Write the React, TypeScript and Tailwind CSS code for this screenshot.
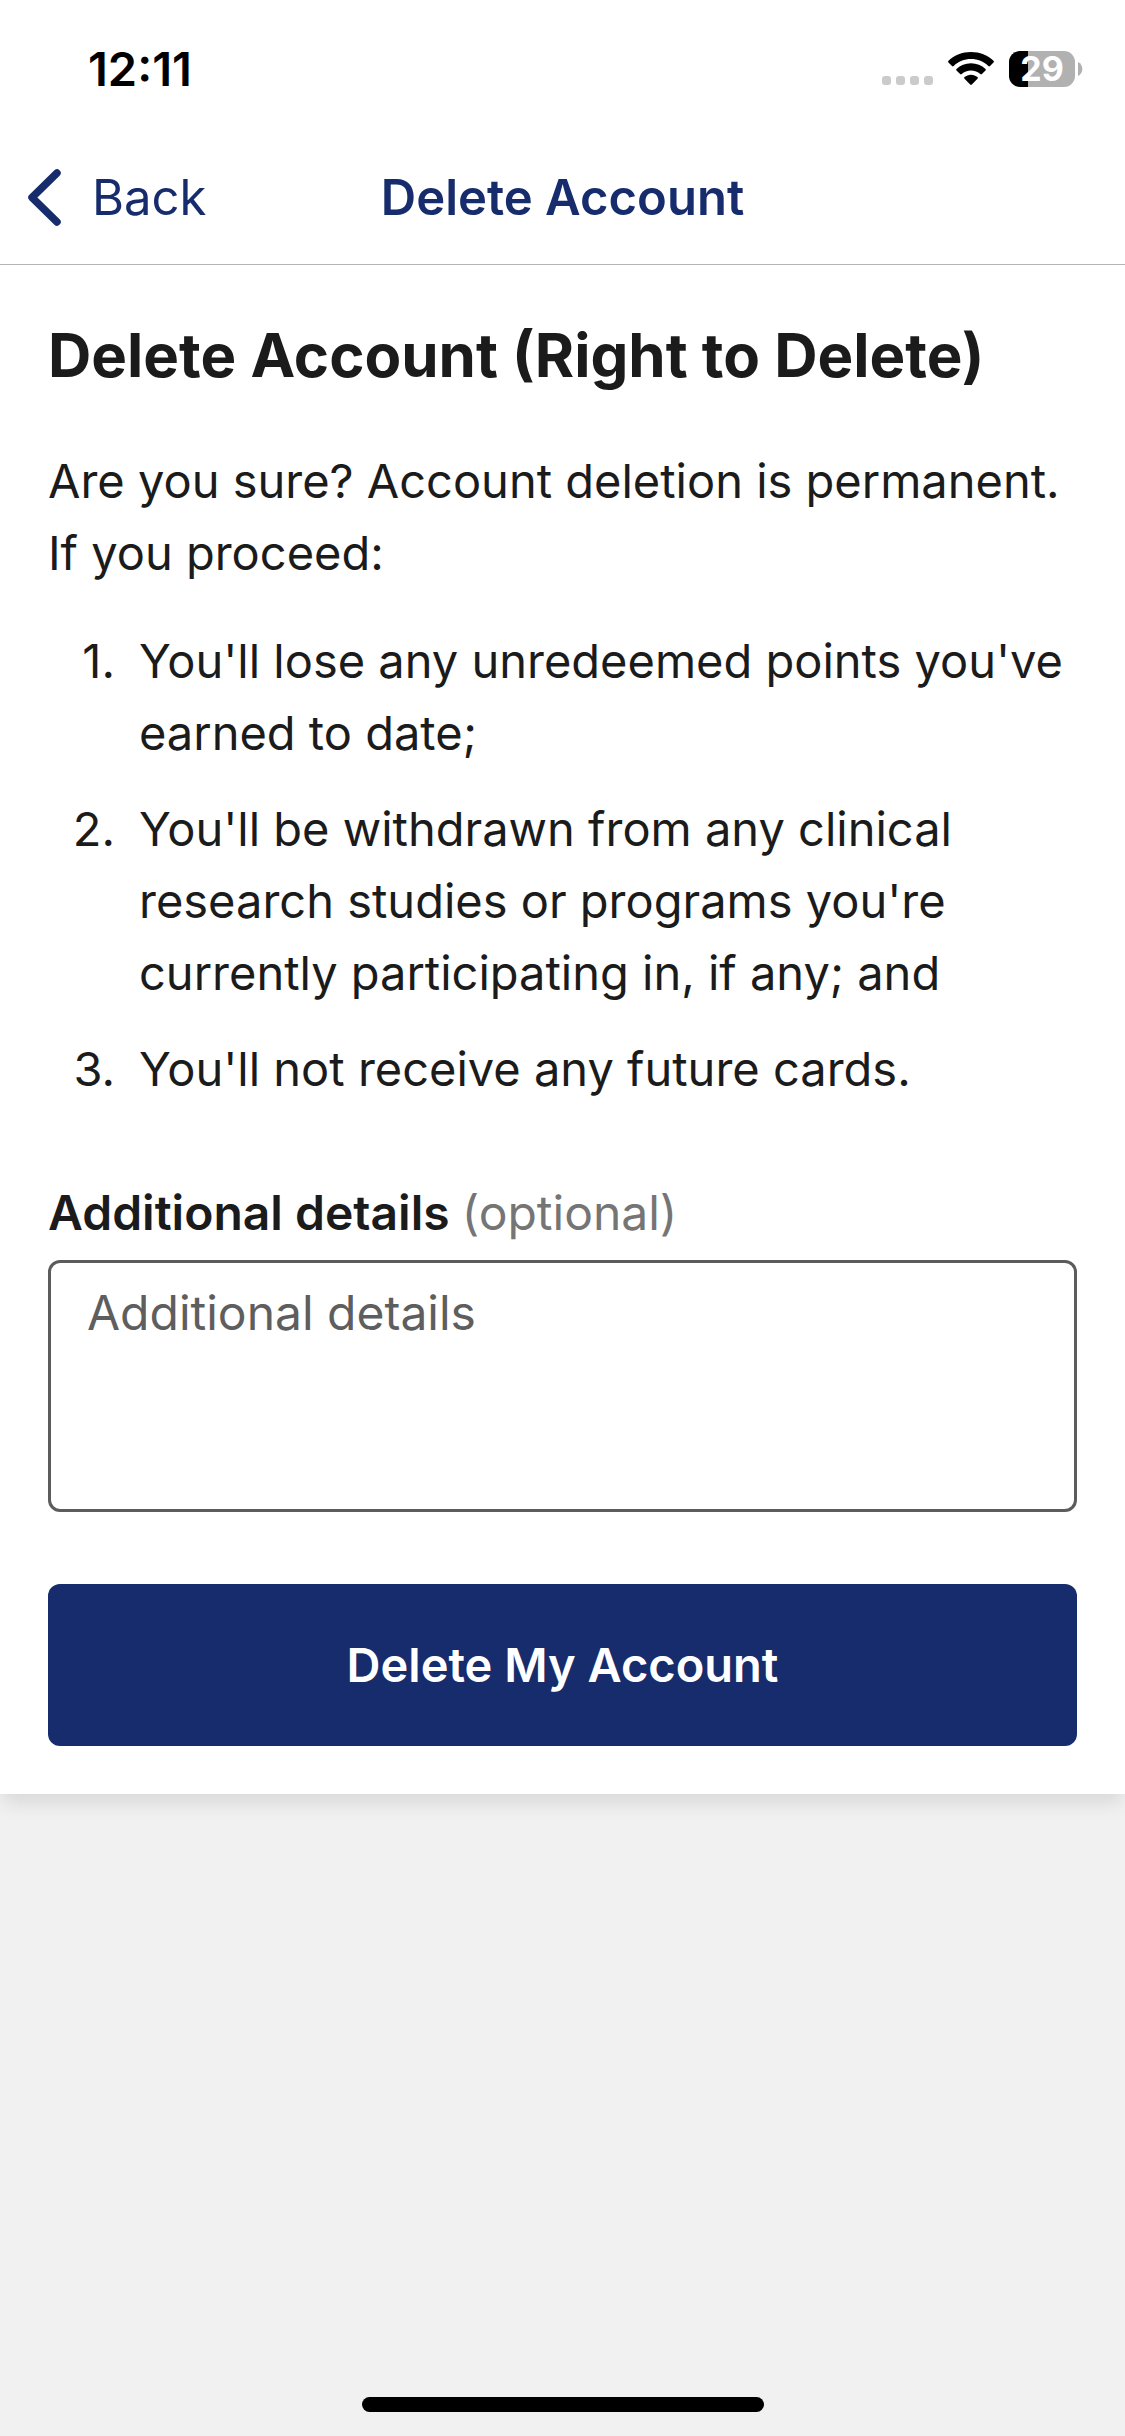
import { useState } from 'react';

const CONSEQUENCES = [
  "You'll lose any unredeemed points you've earned to date;",
  "You'll be withdrawn from any clinical research studies or programs you're currently participating in, if any; and",
  "You'll not receive any future cards.",
];

function StatusBar() {
  return (
    <div className="flex h-[132px] items-center justify-between pl-[88px] pr-[42px] pt-[6px]">
      <span className="text-[47px] leading-[60px] font-semibold text-black">12:11</span>
      <div className="flex items-center gap-[15px]">
        <svg width="114" height="36" viewBox="0 0 114 36" aria-hidden="true">
          <g fill="#cbcbcb">
            <rect x="2" y="25" width="9" height="9" rx="3" />
            <rect x="16" y="25" width="9" height="9" rx="3" />
            <rect x="30" y="25" width="9" height="9" rx="3" />
            <rect x="44" y="25" width="9" height="9" rx="3" />
          </g>
          <g transform="translate(68 1)" fill="#000">
            <path d="M23 0C14.300 0 6.300 3.300 0.500 8.800a1.200 1.200 0 0 0 0 1.700l3.500 3.500a1.200 1.200 0 0 0 1.700 0C10.300 9.700 16.300 7.100 23 7.100s12.700 2.600 17.300 6.900a1.200 1.200 0 0 0 1.700 0l3.500-3.500a1.200 1.200 0 0 0 0-1.700C39.700 3.300 31.700 0 23 0z" />
            <path d="M23 11.300c-5.600 0-10.700 2.100-14.500 5.600a1.200 1.200 0 0 0 0 1.700l3.600 3.500a1.200 1.200 0 0 0 1.600 0c2.500-2.200 5.700-3.600 9.300-3.600s6.800 1.400 9.300 3.600a1.200 1.200 0 0 0 1.600 0l3.600-3.500a1.200 1.200 0 0 0 0-1.700C33.700 13.400 28.600 11.300 23 11.300z" />
            <path d="M23 22.700c-2.500 0-4.800 0.900-6.500 2.400a1.200 1.200 0 0 0 0 1.700l5.700 5.800a1.200 1.200 0 0 0 1.600 0l5.700-5.800a1.200 1.200 0 0 0 0-1.700C27.800 23.600 25.500 22.700 23 22.700z" />
          </g>
        </svg>
        <div className="flex items-center gap-[3px]">
          <div className="flex h-9 w-[66px] items-center justify-center rounded-[11px] bg-linear-to-r from-black from-[29%] to-[#b1b1b1] to-[29%]">
            <span className="text-[34px] leading-9 font-bold text-white">29</span>
          </div>
          <svg width="5" height="14" viewBox="0 0 5 14" aria-hidden="true">
            <path d="M0 0C3 1.500 4.300 4 4.300 7S3 12.500 0 14z" fill="#b1b1b1" />
          </svg>
        </div>
      </div>
    </div>
  );
}

function NavBar() {
  return (
    <header className="grid h-[133px] grid-cols-[1fr_auto_1fr] items-center border-b border-[#b4b4b4] text-[49px] leading-[60px] text-[#162c6c]">
      <button type="button" className="flex items-center gap-[30px] pl-7">
        <svg width="34" height="58" viewBox="0 0 34 58" fill="none" aria-hidden="true">
          <path
            d="M29 4L4 28.500l25 24.500"
            stroke="currentColor"
            strokeWidth="7.500"
            strokeLinecap="round"
            strokeLinejoin="round"
          />
        </svg>
        Back
      </button>
      <span className="font-semibold">Delete Account</span>
    </header>
  );
}

export default function App() {
  const [details, setDetails] = useState('');

  return (
    <div className="flex min-h-screen flex-col bg-[#f1f1f1] font-['Inter',sans-serif] text-[#1b1b1b]">
      <div className="bg-white shadow-[0_12px_18px_-3px_rgba(0,0,0,0.1)]">
        <StatusBar />
        <NavBar />

        <main className="px-12 py-12 text-[47px] leading-[72px]">
          <h1 className="text-[60px] leading-[84px] font-bold">Delete Account (Right to Delete)</h1>
          <p className="mt-12">Are you sure? Account deletion is permanent. If you proceed:</p>

          <ol className="mt-9 flex flex-col gap-6">
            {CONSEQUENCES.map((text, i) => (
              <li key={text} className="flex gap-6">
                <span className="w-[67px] shrink-0 text-right">{i + 1}.</span>
                <span>{text}</span>
              </li>
            ))}
          </ol>

          <form onSubmit={(e) => e.preventDefault()}>
            <label htmlFor="details" className="mt-[72px] block text-[48px] font-semibold">
              Additional details <span className="font-normal text-[#757575]">(optional)</span>
            </label>
            <textarea
              id="details"
              value={details}
              onChange={(e) => setDetails(e.target.value)}
              placeholder="Additional details"
              className="mt-[11px] block h-[252px] w-full resize-none rounded-xl border-[3px] border-[#5c5c5c] bg-white px-9 pt-[14px] text-[48px] placeholder:text-[#5e5e5e]"
            />
            <button
              type="submit"
              className="mt-[72px] block h-[162px] w-full rounded-xl bg-[#162c6c] font-semibold text-white"
            >
              Delete My Account
            </button>
          </form>
        </main>
      </div>

      <div className="mt-auto flex justify-center pb-6">
        <div className="h-[15px] w-[402px] rounded-full bg-black" />
      </div>
    </div>
  );
}
